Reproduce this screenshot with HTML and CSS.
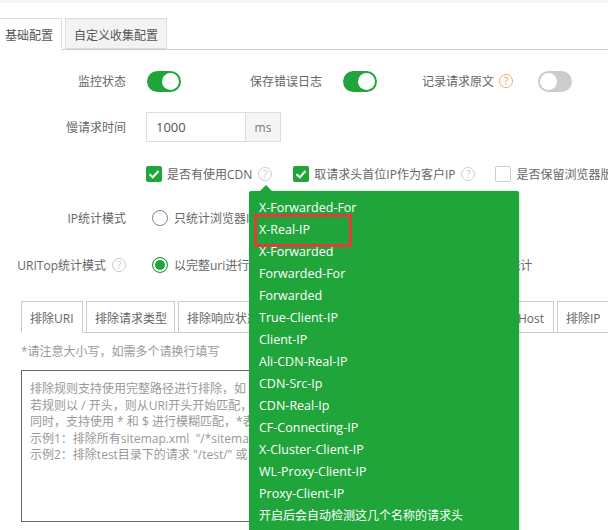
FILE: index.html
```html
<!DOCTYPE html>
<html lang="zh">
<head>
<meta charset="utf-8">
<title>配置</title>
<link rel="stylesheet" href="styles.css">
</head>
<body>
<div class="page">
  <div class="topline"></div>
  <div class="tabs">
    <div class="tab tab-first active">基础配置</div>
    <div class="tab inactive">自定义收集配置</div>
  </div>

  <div class="row row-switch">
    <span class="label">监控状态</span>
    <span class="switch on"><i></i></span>
    <span class="inline-label save-log">保存错误日志</span>
    <span class="switch on"><i></i></span>
    <span class="inline-label raw">记录请求原文</span>
    <span class="help orange">?</span>
    <span class="switch off"><i></i></span>
  </div>

  <div class="row row-input">
    <span class="label">慢请求时间</span>
    <span class="input">1000</span>
    <span class="addon">ms</span>
  </div>

  <div class="row row-check">
    <span class="label"></span>
    <span class="check on"><svg viewBox="0 0 16 16" width="16" height="16"><path d="M3.5 8.2 6.8 11.3 12.5 5" fill="none" stroke="#fff" stroke-width="2"/></svg></span>
    <span class="check-text">是否有使用CDN</span>
    <span class="help">?</span>
    <span class="check on second"><svg viewBox="0 0 16 16" width="16" height="16"><path d="M3.5 8.2 6.8 11.3 12.5 5" fill="none" stroke="#fff" stroke-width="2"/></svg></span>
    <span class="check-text">取请求头首位IP作为客户IP</span>
    <span class="help">?</span>
    <span class="check third"></span>
    <span class="check-text">是否保留浏览器版本</span>
  </div>

  <div class="row row-ip">
    <span class="label">IP统计模式</span>
    <span class="radio"></span>
    <span class="check-text">只统计浏览器IP</span>
  </div>

  <div class="row row-uri">
    <span class="label label-flex">URITop统计模式<span class="help label-help">?</span></span>
    <span class="radio selected"></span>
    <span class="check-text">以完整uri进行统计</span>
    <span class="uri-right">统计</span>
  </div>

  <div class="subtabs">
    <div class="subtab current w1">排除URI</div>
    <div class="subtab w2">排除请求类型</div>
    <div class="subtab w3">排除响应状态</div>
    <div class="subtab w4">排除Host</div>
    <div class="subtab w5">排除IP</div>
  </div>

  <p class="note">*请注意大小写，如需多个请换行填写</p>

  <div class="textarea">
    <div>排除规则支持使用完整路径进行排除，如 /index.php</div>
    <div>若规则以 / 开头，则从URI开头开始匹配，</div>
    <div>同时，支持使用 * 和 $ 进行模糊匹配，*表示任意</div>
    <div>示例1：排除所有sitemap.xml &nbsp;"/*sitemap.xml"</div>
    <div>示例2：排除test目录下的请求 "/test/" 或 "/test/*"</div>
  </div>

  <div class="dropdown">
    <div class="item">X-Forwarded-For</div>
    <div class="item">X-Real-IP</div>
    <div class="item">X-Forwarded</div>
    <div class="item">Forwarded-For</div>
    <div class="item">Forwarded</div>
    <div class="item">True-Client-IP</div>
    <div class="item">Client-IP</div>
    <div class="item">Ali-CDN-Real-IP</div>
    <div class="item">CDN-Src-Ip</div>
    <div class="item">CDN-Real-Ip</div>
    <div class="item">CF-Connecting-IP</div>
    <div class="item">X-Cluster-Client-IP</div>
    <div class="item">WL-Proxy-Client-IP</div>
    <div class="item">Proxy-Client-IP</div>
    <div class="item item-cn">开启后会自动检测这几个名称的请求头</div>
  </div>
  <div class="arrow"></div>
  <div class="redbox"></div>
</div>
</body>
</html>
```

FILE: styles.css
```css
* { box-sizing: border-box; }
html, body { margin: 0; padding: 0; background: #fff; }
.page {
  position: relative;
  width: 608px;
  height: 530px;
  overflow: hidden;
  font-family: "Open Sans", "Noto Sans CJK SC", sans-serif;
  font-size: 12px;
  color: #666;
}
.topline { height: 3px; background: #f6f6f6; }

.tabs {
  display: flex;
  margin-top: 15px;
  height: 32px;
  border-bottom: 1px solid #ccc;
}
.tab {
  height: 32px;
  line-height: 34px;
  border: 1px solid #ddd;
  color: #555;
}
.tab-first {
  width: 62px;
  padding-left: 5px;
  border-left: 0;
  border-bottom-color: #fff;
  background: #fff;
}
.inactive {
  width: 102px;
  margin-left: 3px;
  padding-left: 8px;
  height: 31px;
  background: #f3f3f3;
}

.row { display: flex; align-items: center; white-space: nowrap; }
.label { width: 126px; margin-right: 20px; text-align: right; flex: none; }
.label-flex { display: flex; align-items: center; justify-content: flex-end; }
.row-switch { margin-top: 20px; height: 22px; }
.row-input { margin-top: 20px; height: 30px; }
.row-check { margin-top: 24px; height: 16px; }
.row-ip { margin-top: 26px; height: 20px; }
.row-uri { margin-top: 27px; height: 20px; }

.switch {
  position: relative;
  flex: none;
  width: 34px;
  height: 21px;
  border-radius: 11px;
  background: #20a53a;
  margin-left: 1px;
}
.switch i {
  position: absolute;
  top: 2px;
  right: 2px;
  width: 17px;
  height: 17px;
  border-radius: 50%;
  background: #fff;
}
.switch.off { background: #ccc; }
.switch.off i { left: 2px; right: auto; }
.inline-label.save-log { margin-left: 69px; margin-right: 20px; }
.inline-label.raw { margin-left: 45px; }

.help {
  flex: none;
  width: 14px;
  height: 14px;
  margin-left: 6px;
  border: 1px solid #ccc;
  border-radius: 50%;
  color: #ccc;
  font-size: 11px;
  line-height: 12px;
  text-align: center;
}
.help.orange { border-color: #f0ad6e; color: #eb9f4f; margin-left: 5px; margin-right: 24px; }
.label-help { margin-left: 6px; }

.input {
  width: 100px;
  height: 30px;
  padding-left: 9px;
  line-height: 28px;
  border: 1px solid #ddd;
  font-size: 13px;
  color: #555;
}
.addon {
  width: 36px;
  height: 30px;
  margin-left: -1px;
  line-height: 30px;
  text-align: center;
  border: 1px solid #ddd;
  background: #f5f5f5;
  color: #777;
}

.check {
  flex: none;
  width: 16px;
  height: 16px;
  border-radius: 2px;
  border: 1px solid #ccc;
  display: flex;
  align-items: center;
  justify-content: center;
}
.check.on { background: #20a53a; border: 0; }
.check.second { margin-left: 21px; }
.check.third { margin-left: 20px; }
.check-text { margin-left: 5px; }

.radio {
  flex: none;
  width: 16px;
  height: 16px;
  margin-left: 6px;
  margin-right: 1px;
  border: 1px solid #888;
  border-radius: 50%;
  background: #fff;
}
.radio.selected {
  border-color: #20a53a;
  background: #20a53a;
  box-shadow: inset 0 0 0 2px #fff;
}
.uri-right { margin-left: 235px; }

.subtabs {
  display: flex;
  margin-top: 26px;
  margin-left: 21px;
  height: 32px;
  border-bottom: 1px solid #ccc;
}
.subtab {
  flex: none;
  height: 32px;
  line-height: 34px;
  padding-left: 8px;
  border: 1px solid #ccc;
  margin-right: 3px;
  color: #666;
  white-space: nowrap;
}
.current { border-bottom-color: #fff; }
.w1 { width: 62px; }
.w2 { width: 89px; }
.w3 { width: 110px; margin-right: 0; }
.w4 { width: 266px; padding-left: 205px; }
.w5 { width: 60px; margin-right: 0; }

.note { margin: 11px 0 0 21px; line-height: 16px; color: #999; }

.textarea {
  width: 400px;
  height: 152px;
  margin: 10px 0 0 21px;
  padding: 10px 0 0 8px;
  border: 1px solid #666;
  color: #999;
  line-height: 16.6px;
  white-space: nowrap;
  overflow: hidden;
}

.dropdown {
  position: absolute;
  left: 249px;
  top: 191px;
  width: 270px;
  height: 345px;
  padding: 6px 10px;
  background: #20a53a;
  border-radius: 2px;
  box-shadow: 1px 0 3px rgba(0, 0, 0, 0.15);
  color: #fff;
  font-size: 12.5px;
}
.item { height: 22px; line-height: 22px; white-space: nowrap; }
.item-cn { font-size: 12px; }
.arrow {
  position: absolute;
  left: 260px;
  top: 185px;
  width: 0;
  height: 0;
  border-left: 6px solid transparent;
  border-right: 6px solid transparent;
  border-bottom: 6px solid #20a53a;
}
.redbox {
  position: absolute;
  left: 254px;
  top: 214px;
  width: 98px;
  height: 33px;
  border: 3px solid #e23b3b;
}
```
